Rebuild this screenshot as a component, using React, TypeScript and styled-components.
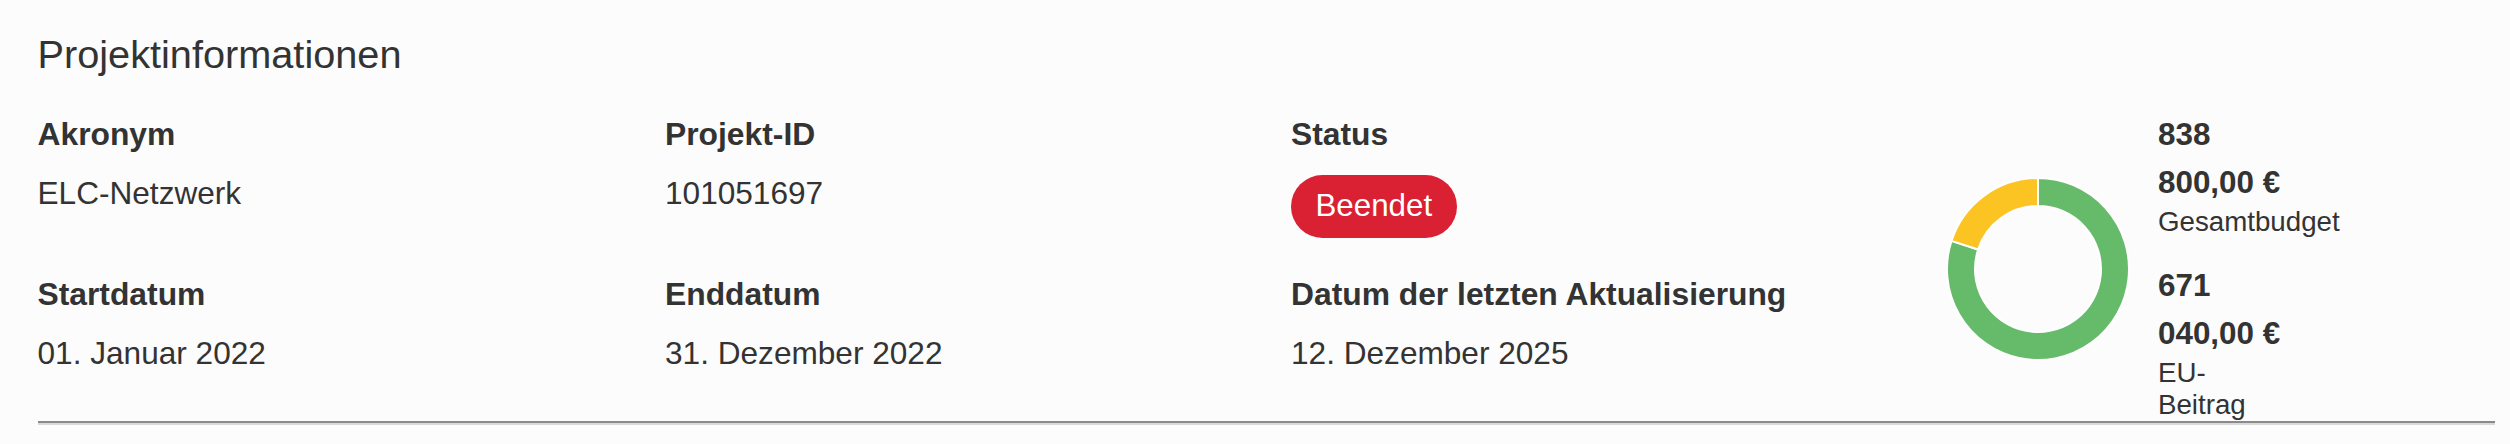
import styled, { createGlobalStyle } from "styled-components";

const GlobalStyle = createGlobalStyle`
    html, body {
        margin: 0;
        padding: 0;
        background: #fcfcfc;
    }
    body {
        font-family: "Liberation Sans", Arial, sans-serif;
        color: #333333;
    }
`;

const Page = styled.div`
    padding: 31px 15px 0 37.5px;
    width: 2457.5px;
`;

const Title = styled.h2`
    margin: 0 0 32.5px 0;
    font-size: 39.7px;
    font-weight: 400;
    line-height: 47.4px;
`;

const Body = styled.div`
    display: flex;
    align-items: flex-start;
`;

const FieldGrid = styled.div`
    display: grid;
    grid-template-columns: 627.5px 626px 627px;
    row-gap: 32.5px;
    align-items: start;
`;

const Field = styled.div`
    display: flex;
    flex-direction: column;
    align-items: flex-start;
`;

const Label = styled.div`
    font-size: 31.8px;
    font-weight: 700;
    line-height: 47.25px;
    margin-bottom: 12.25px;
`;

const Value = styled.div`
    font-size: 31.6px;
    line-height: 46.5px;
`;

const Badge = styled.span<{ $tone: string }>`
    display: inline-block;
    box-sizing: border-box;
    height: 63px;
    margin-top: 5px;
    padding: 0 24.5px;
    border-radius: 32px;
    background: ${p => p.$tone};
    color: #ffffff;
    font-size: 31.3px;
    line-height: 61px;
`;

const Budget = styled.div`
    display: flex;
    align-items: center;
    align-self: stretch;
    padding-left: 28px;
    gap: 28px;
`;

const ChartBox = styled.div`
    width: 184px;
    height: 184px;
    margin-top: 6px;
    flex-shrink: 0;
`;

const Legend = styled.div`
    display: flex;
    flex-direction: column;
    gap: 23.8px;
`;

const LegendItem = styled.div<{ $width: number }>`
    width: ${p => p.$width}px;
`;

const Amount = styled.div`
    font-size: 31.4px;
    font-weight: 700;
    line-height: 47.7px;
`;

const Caption = styled.div`
    font-size: 27.7px;
    line-height: 31.7px;
`;

const Divider = styled.div`
    height: 0;
    border-top: 2px solid #8a8a8a;
    border-bottom: 2px solid #d9d9d9;
`;

const GREEN = "#66bb6a";
const YELLOW = "#fbc423";

const point = (cx: number, cy: number, r: number, deg: number) => {
    const a = (deg * Math.PI) / 180;
    return [cx + r * Math.sin(a), cy - r * Math.cos(a)];
};

const sectorPath = (from: number, to: number, ro: number, ri: number) => {
    const c = 92;
    const large = to - from > 180 ? 1 : 0;
    const [x1, y1] = point(c, c, ro, from);
    const [x2, y2] = point(c, c, ro, to);
    const [x3, y3] = point(c, c, ri, to);
    const [x4, y4] = point(c, c, ri, from);
    return `M${x1} ${y1} A${ro} ${ro} 0 ${large} 1 ${x2} ${y2} L${x3} ${y3} A${ri} ${ri} 0 ${large} 0 ${x4} ${y4} Z`;
};

const Doughnut = ({ parts }: { parts: { value: number, color: string }[] }) => {
    const total = parts.reduce((s, p) => s + p.value, 0);
    let start = 0;
    return (
        <svg width="184" height="184" viewBox="0 0 184 184">
            {parts.map((p, i) => {
                const end = start + (p.value / total) * 360;
                const d = sectorPath(start, end, 91, 63);
                start = end;
                return <path key={i} d={d} fill={p.color} stroke="#ffffff" strokeWidth={2} strokeLinejoin="round" />;
            })}
        </svg>
    );
};

const fields = [
    { label: "Akronym", value: "ELC-Netzwerk" },
    { label: "Projekt-ID", value: "101051697" },
    { label: "Status", badge: "Beendet" },
    { label: "Startdatum", value: "01. Januar 2022" },
    { label: "Enddatum", value: "31. Dezember 2022" },
    { label: "Datum der letzten Aktualisierung", value: "12. Dezember 2025" },
];

const App = () => {
    return (
        <>
            <GlobalStyle />
            <Page>
                <Title>Projektinformationen</Title>
                <Body>
                    <FieldGrid>
                        {fields.map(f => (
                            <Field key={f.label}>
                                <Label>{f.label}</Label>
                                {f.badge
                                    ? <Badge $tone="#da2033">{f.badge}</Badge>
                                    : <Value>{f.value}</Value>}
                            </Field>
                        ))}
                    </FieldGrid>
                    <Budget>
                        <ChartBox>
                            <Doughnut parts={[{ value: 671040, color: GREEN }, { value: 167760, color: YELLOW }]} />
                        </ChartBox>
                        <Legend>
                            <LegendItem $width={183}>
                                <Amount>838 800,00&nbsp;€</Amount>
                                <Caption>Gesamtbudget</Caption>
                            </LegendItem>
                            <LegendItem $width={125}>
                                <Amount>671 040,00&nbsp;€</Amount>
                                <Caption>EU-Beitrag</Caption>
                            </LegendItem>
                        </Legend>
                    </Budget>
                </Body>
                <Divider />
            </Page>
        </>
    );
};

export default App;
